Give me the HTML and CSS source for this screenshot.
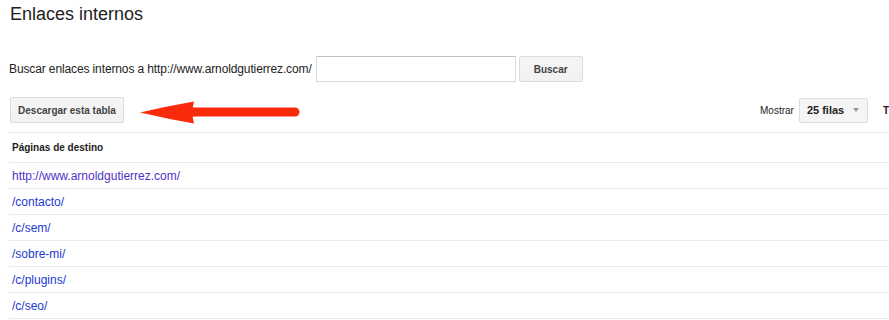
FILE: index.html
```html
<!DOCTYPE html>
<html lang="es">
<head>
    <meta charset="UTF-8">
    <meta name="viewport" content="width=device-width, initial-scale=1.0">
    <title>Enlaces internos</title>
    <link rel="stylesheet" href="styles.css">
</head>
<body>

    <div class="page">
        <h1 class="title">Enlaces internos</h1>

        <form class="search-row">
            <label for="q">Buscar enlaces internos a http://www.arnoldgutierrez.com/</label>
            <input type="text" id="q" class="search-input">
            <button type="button" class="button">Buscar</button>
        </form>

        <div class="toolbar">
            <button type="button" class="button button-download">Descargar esta tabla</button>

            <!-- flecha roja de la captura -->
            <svg class="arrow" width="166" height="26" viewBox="0 0 166 26">
                <line x1="52" y1="12" x2="157" y2="12" stroke="#fa2a0c" stroke-width="9" stroke-linecap="round"/>
                <path d="M2 12.5 Q30 6 56 1.5 Q53 12.5 56 23.5 Q30 19 2 12.5 Z" fill="#fa2a0c"/>
            </svg>

            <div class="rows-control">
                <span class="rows-label">Mostrar</span>
                <div class="select">
                    <span>25 filas</span>
                    <span class="caret"></span>
                </div>
                <span class="more">T</span>
            </div>
        </div>

        <table class="links">
            <thead>
                <tr><th>Páginas de destino</th></tr>
            </thead>
            <tbody>
                <tr><td><a href="#" class="visited">http://www.arnoldgutierrez.com/</a></td></tr>
                <tr><td><a href="#">/contacto/</a></td></tr>
                <tr><td><a href="#">/c/sem/</a></td></tr>
                <tr><td><a href="#">/sobre-mi/</a></td></tr>
                <tr><td><a href="#">/c/plugins/</a></td></tr>
                <tr><td><a href="#">/c/seo/</a></td></tr>
            </tbody>
        </table>
    </div>

</body>
</html>
```

FILE: styles.css
```css
html, body {
    margin: 0;
    overflow: hidden;
    background-color: #ffffff;
}
body {
    font-family: Arial, "Liberation Sans", sans-serif;
    font-size: 12px;
    color: #222222;
}
.page {
    width: 940px;
    padding: 0 0 0 9px;
}
.title {
    margin: 0;
    padding: 2px 0 0 1px;
    font-size: 18px;
    font-weight: normal;
    line-height: 24px;
    color: #222222;
}
.search-row {
    display: flex;
    align-items: center;
    margin: 30px 0 0 0;
    height: 26px;
}
.search-row label {
    letter-spacing: -0.12px;
}
.search-input {
    box-sizing: border-box;
    width: 200px;
    height: 26px;
    margin: 0 3px 0 4px;
    border: 1px solid #d9d9d9;
    border-top-color: #c0c0c0;
    padding: 0 6px;
}
.button {
    box-sizing: border-box;
    height: 26px;
    padding: 0;
    font-family: Arial, "Liberation Sans", sans-serif;
    font-size: 10px;
    font-weight: bold;
    color: #444444;
    white-space: nowrap;
    background-color: #f5f5f5;
    background-image: linear-gradient(#f5f5f5, #f1f1f1);
    border: 1px solid #dcdcdc;
    border-radius: 2px;
}
.search-row .button {
    width: 64px;
}
.toolbar {
    position: relative;
    display: flex;
    align-items: center;
    margin-top: 15px;
    height: 26px;
}
.button-download {
    width: 114px;
    margin-left: 1px;
}
.arrow {
    position: absolute;
    left: 129px;
    top: 3px;
}
.rows-control {
    display: flex;
    align-items: center;
    margin-left: 636px;
}
.rows-label {
    font-size: 10px;
    color: #222222;
    margin-right: 5px;
}
.select {
    box-sizing: border-box;
    display: flex;
    align-items: center;
    justify-content: space-between;
    width: 69px;
    height: 25px;
    padding: 0 8px 0 7px;
    font-size: 11px;
    font-weight: bold;
    color: #222222;
    background-color: #f5f5f5;
    border: 1px solid #dcdcdc;
    border-radius: 2px;
}
.caret {
    width: 0;
    height: 0;
    border-left: 3px solid transparent;
    border-right: 3px solid transparent;
    border-top: 4px solid #999999;
}
.more {
    margin-left: 15px;
    font-size: 10px;
    font-weight: bold;
}
.links {
    width: 100%;
    margin-top: 9px;
    border-collapse: collapse;
}
.links th,
.links td {
    text-align: left;
    padding: 0 0 0 3px;
    border-top: 1px solid #ebebeb;
    border-bottom: 1px solid #ebebeb;
}
.links th {
    height: 29px;
    font-size: 10px;
    font-weight: bold;
    color: #222222;
}
.links td {
    height: 25px;
}
.links a {
    color: #1c39d2;
    text-decoration: none;
}
.links a.visited {
    color: #5131c9;
}
```
